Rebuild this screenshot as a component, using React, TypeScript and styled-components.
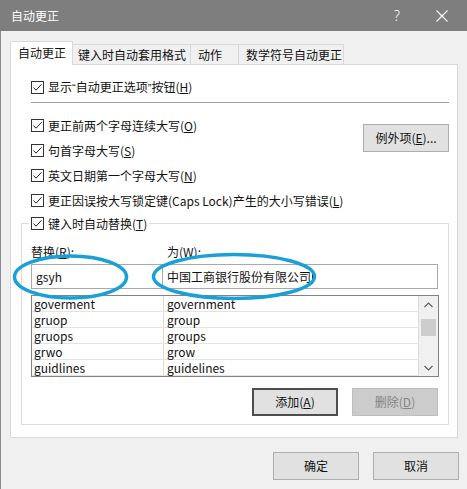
import React from "react";
import styled, { createGlobalStyle } from "styled-components";

const GlobalStyle = createGlobalStyle`
  html, body { margin: 0; padding: 0; background: #ffffff; }
  body {
    font-family: "Noto Sans CJK SC", "Noto Sans", sans-serif;
    font-size: 12px;
    color: #111;
  }
  * { box-sizing: border-box; }
`;

const Window = styled.div`
  position: relative;
  width: 467px;
  height: 489px;
  background: #f0f0f0;
  display: flex;
  flex-direction: column;
  overflow: hidden;
`;

const TitleBar = styled.div`
  height: 31px;
  flex: none;
  background: #7e7e7e;
  color: #fff;
  display: flex;
  align-items: center;
  padding-left: 11px;
  line-height: 16px;
`;

const TitleText = styled.div`
  flex: 1;
`;

const TitleHelp = styled.div`
  width: 14px;
  text-align: center;
  font-family: "Noto Sans", sans-serif;
  font-size: 14px;
  font-weight: 300;
  margin-right: 32px;
`;

const TitleClose = styled.div`
  width: 12px;
  height: 12px;
  margin-right: 19px;
  display: flex;
`;

const Body = styled.div`
  flex: 1;
  display: flex;
  flex-direction: column;
  border-left: 1px solid #8c8c8c;
  padding: 10px 0 0 9px;
`;

const TabStrip = styled.div`
  display: flex;
  align-items: flex-end;
  height: 24px;
  margin-bottom: -1px;
  position: relative;
  z-index: 1;
`;

const Tab = styled.div<{ $w: number; $pl: number; $active?: boolean }>`
  width: ${(p) => p.$w}px;
  height: ${(p) => (p.$active ? 24 : 21)}px;
  padding-left: ${(p) => p.$pl}px;
  background: ${(p) => (p.$active ? "#ffffff" : "#f0f0f0")};
  border: 1px solid #d9d9d9;
  border-bottom: ${(p) => (p.$active ? "none" : "1px solid #d9d9d9")};
  margin-left: ${(p) => (p.$active ? 0 : -1)}px;
  line-height: ${(p) => (p.$active ? 22 : 19)}px;
  white-space: nowrap;
  z-index: ${(p) => (p.$active ? 2 : 1)};
  position: relative;
`;

const Panel = styled.div`
  width: 448px;
  height: 374px;
  background: #ffffff;
  border: 1px solid #d9d9d9;
  padding: 10px 8px 0 10px;
  display: flex;
  flex-direction: column;
`;

const TopSection = styled.div`
  padding-left: 10px;
  display: flex;
  flex-direction: column;
`;

const CheckRow = styled.label`
  display: flex;
  align-items: center;
  height: 25px;
  gap: 4px;
  white-space: nowrap;
  line-height: 16px;
`;

const Box = styled.span`
  width: 13px;
  height: 13px;
  flex: none;
  border: 1px solid #333;
  background: #fff;
  display: flex;
`;

const Quote = styled.span`
  font-family: "Liberation Sans", sans-serif;
  font-size: 11px;
`;

const Separator = styled.div`
  height: 1px;
  background: #a0a0a0;
  margin-top: 2px;
`;

const OptionsBlock = styled.div`
  display: flex;
  justify-content: space-between;
  align-items: flex-start;
  margin-top: 10px;
`;

const OptionsList = styled.div`
  display: flex;
  flex-direction: column;
`;

const Button = styled.div<{ $variant?: "default" | "disabled" }>`
  width: 86px;
  height: 28px;
  flex: none;
  display: flex;
  align-items: center;
  justify-content: center;
  line-height: 16px;
  background: ${(p) => (p.$variant === "disabled" ? "#cccccc" : "#e1e1e1")};
  color: ${(p) => (p.$variant === "disabled" ? "#848484" : "#111")};
  border: ${(p) =>
    p.$variant === "default" ? "2px solid #4e4e4e" : p.$variant === "disabled" ? "1px solid #bfbfbf" : "1px solid #adadad"};
`;

const ExceptionsButton = styled(Button)`
  margin-top: 11px;
`;

const GroupBox = styled.fieldset`
  margin: -2px 0 0 0;
  padding: 0 9px 8px 9px;
  border: 1px solid #dcdcdc;
  min-width: 0;
  height: 214px;
  display: flex;
  flex-direction: column;
`;

const Legend = styled.legend`
  padding: 0 2px;
  margin-left: -2px;
`;

const FieldLabels = styled.div`
  display: grid;
  grid-template-columns: 136px 1fr;
  height: 16px;
  line-height: 16px;
  margin-top: 8px;
`;

const InputRow = styled.div`
  display: flex;
  margin-top: 4px;
`;

const TextInput = styled.div<{ $w: number }>`
  width: ${(p) => p.$w}px;
  height: 25px;
  border: 1px solid #a9a9a9;
  background: #fff;
  padding-left: 4px;
  display: flex;
  align-items: center;
  line-height: 16px;
  & + & { margin-left: -1px; }
`;

const Caret = styled.span`
  display: inline-block;
  width: 1px;
  height: 14px;
  background: #000;
  margin-left: 1px;
`;

const ListBox = styled.div`
  margin-top: 6px;
  height: 82px;
  border: 1px solid #828282;
  display: flex;
  background: #fff;
`;

const Table = styled.div`
  flex: 1;
  display: grid;
  grid-template-columns: 132px 1fr;
  grid-auto-rows: 16px;
`;

const Cell = styled.div`
  border-right: 1px solid #dcdcdc;
  border-bottom: 1px solid #e3e3e3;
  padding-left: 2px;
  line-height: 15px;
  font-size: 12px;
  white-space: nowrap;
  &:nth-child(2n) { padding-left: 3px; }
`;

const ScrollBar = styled.div`
  width: 19px;
  flex: none;
  background: #f0f0f0;
  display: flex;
  flex-direction: column;
  align-items: center;
  padding: 0 2px;
`;

const ScrollArrow = styled.div`
  height: 17px;
  width: 100%;
  display: flex;
  align-items: center;
  justify-content: center;
`;

const ScrollTrack = styled.div`
  flex: 1;
  width: 100%;
  padding-top: 6px;
`;

const Thumb = styled.div`
  width: 15px;
  height: 17px;
  background: #cdcdcd;
`;

const GroupButtons = styled.div`
  display: flex;
  justify-content: flex-end;
  gap: 14px;
  margin-top: 11px;
  margin-right: 1px;
`;

const Footer = styled.div`
  display: flex;
  justify-content: flex-end;
  gap: 14px;
  padding-right: 8px;
  margin-top: 14px;
`;

const Marks = styled.svg`
  position: absolute;
  left: 0;
  top: 0;
  pointer-events: none;
`;

const Check = () => (
  <Box>
    <svg width="11" height="11" viewBox="0 0 11 11">
      <path d="M1.5 5.5 L4 8.2 L9.6 2.2" fill="none" stroke="#222" strokeWidth="1" />
    </svg>
  </Box>
);

const Chevron = ({ up }: { up?: boolean }) => (
  <svg width="9" height="6" viewBox="0 0 9 6">
    <path d={up ? "M0.5 5 L4.5 1 L8.5 5" : "M0.5 1 L4.5 5 L8.5 1"} fill="none" stroke="#606060" strokeWidth="1.2" />
  </svg>
);

const rows: [string, string][] = [
  ["goverment", "government"],
  ["gruop", "group"],
  ["gruops", "groups"],
  ["grwo", "grow"],
  ["guidlines", "guidelines"],
];

export default function App() {
  return (
    <>
      <GlobalStyle />
      <Window>
        <TitleBar>
          <TitleText>自动更正</TitleText>
          <TitleHelp>?</TitleHelp>
          <TitleClose>
            <svg width="12" height="12" viewBox="0 0 12 12">
              <path d="M0.5 0.5 L11.5 11.5 M11.5 0.5 L0.5 11.5" stroke="#fff" strokeWidth="1.1" />
            </svg>
          </TitleClose>
        </TitleBar>
        <Body>
          <TabStrip>
            <Tab $w={63} $pl={7} $active>自动更正</Tab>
            <Tab $w={119} $pl={5}>键入时自动套用格式</Tab>
            <Tab $w={49} $pl={7}>动作</Tab>
            <Tab $w={106} $pl={7}>数学符号自动更正</Tab>
          </TabStrip>
          <Panel>
            <TopSection>
              <CheckRow>
                <Check />
                <span>
                  显示<Quote>“</Quote>自动更正选项<Quote>”</Quote>按钮(<u>H</u>)
                </span>
              </CheckRow>
              <Separator />
              <OptionsBlock>
                <OptionsList>
                  <CheckRow>
                    <Check />
                    <span>更正前两个字母连续大写(<u>O</u>)</span>
                  </CheckRow>
                  <CheckRow>
                    <Check />
                    <span>句首字母大写(<u>S</u>)</span>
                  </CheckRow>
                  <CheckRow>
                    <Check />
                    <span>英文日期第一个字母大写(<u>N</u>)</span>
                  </CheckRow>
                  <CheckRow>
                    <Check />
                    <span>更正因误按大写锁定键(Caps Lock)产生的大小写错误(<u>L</u>)</span>
                  </CheckRow>
                </OptionsList>
                <ExceptionsButton>例外项(<u>E</u>)...</ExceptionsButton>
              </OptionsBlock>
            </TopSection>
            <GroupBox>
              <Legend>
                <CheckRow>
                  <Check />
                  <span>键入时自动替换(<u>T</u>)</span>
                </CheckRow>
              </Legend>
              <FieldLabels>
                <span>替换(<u>R</u>):</span>
                <span>为(<u>W</u>):</span>
              </FieldLabels>
              <InputRow>
                <TextInput $w={132}>gsyh</TextInput>
                <TextInput $w={276}>
                  中国工商银行股份有限公司<Caret />
                </TextInput>
              </InputRow>
              <ListBox>
                <Table>
                  {rows.map(([a, b]) => (
                    <React.Fragment key={a}>
                      <Cell>{a}</Cell>
                      <Cell>{b}</Cell>
                    </React.Fragment>
                  ))}
                </Table>
                <ScrollBar>
                  <ScrollArrow>
                    <Chevron up />
                  </ScrollArrow>
                  <ScrollTrack>
                    <Thumb />
                  </ScrollTrack>
                  <ScrollArrow>
                    <Chevron />
                  </ScrollArrow>
                </ScrollBar>
              </ListBox>
              <GroupButtons>
                <Button $variant="default">添加(<u>A</u>)</Button>
                <Button $variant="disabled">删除(<u>D</u>)</Button>
              </GroupButtons>
            </GroupBox>
          </Panel>
          <Footer>
            <Button>确定</Button>
            <Button>取消</Button>
          </Footer>
        </Body>
        <Marks width="467" height="489" viewBox="0 0 467 489">
          <ellipse cx="70.5" cy="277" rx="56" ry="21" fill="none" stroke="#1aa0d8" strokeWidth="3.5" />
          <ellipse cx="234" cy="276.5" rx="80.5" ry="22" fill="none" stroke="#1aa0d8" strokeWidth="3.5" />
        </Marks>
      </Window>
    </>
  );
}
